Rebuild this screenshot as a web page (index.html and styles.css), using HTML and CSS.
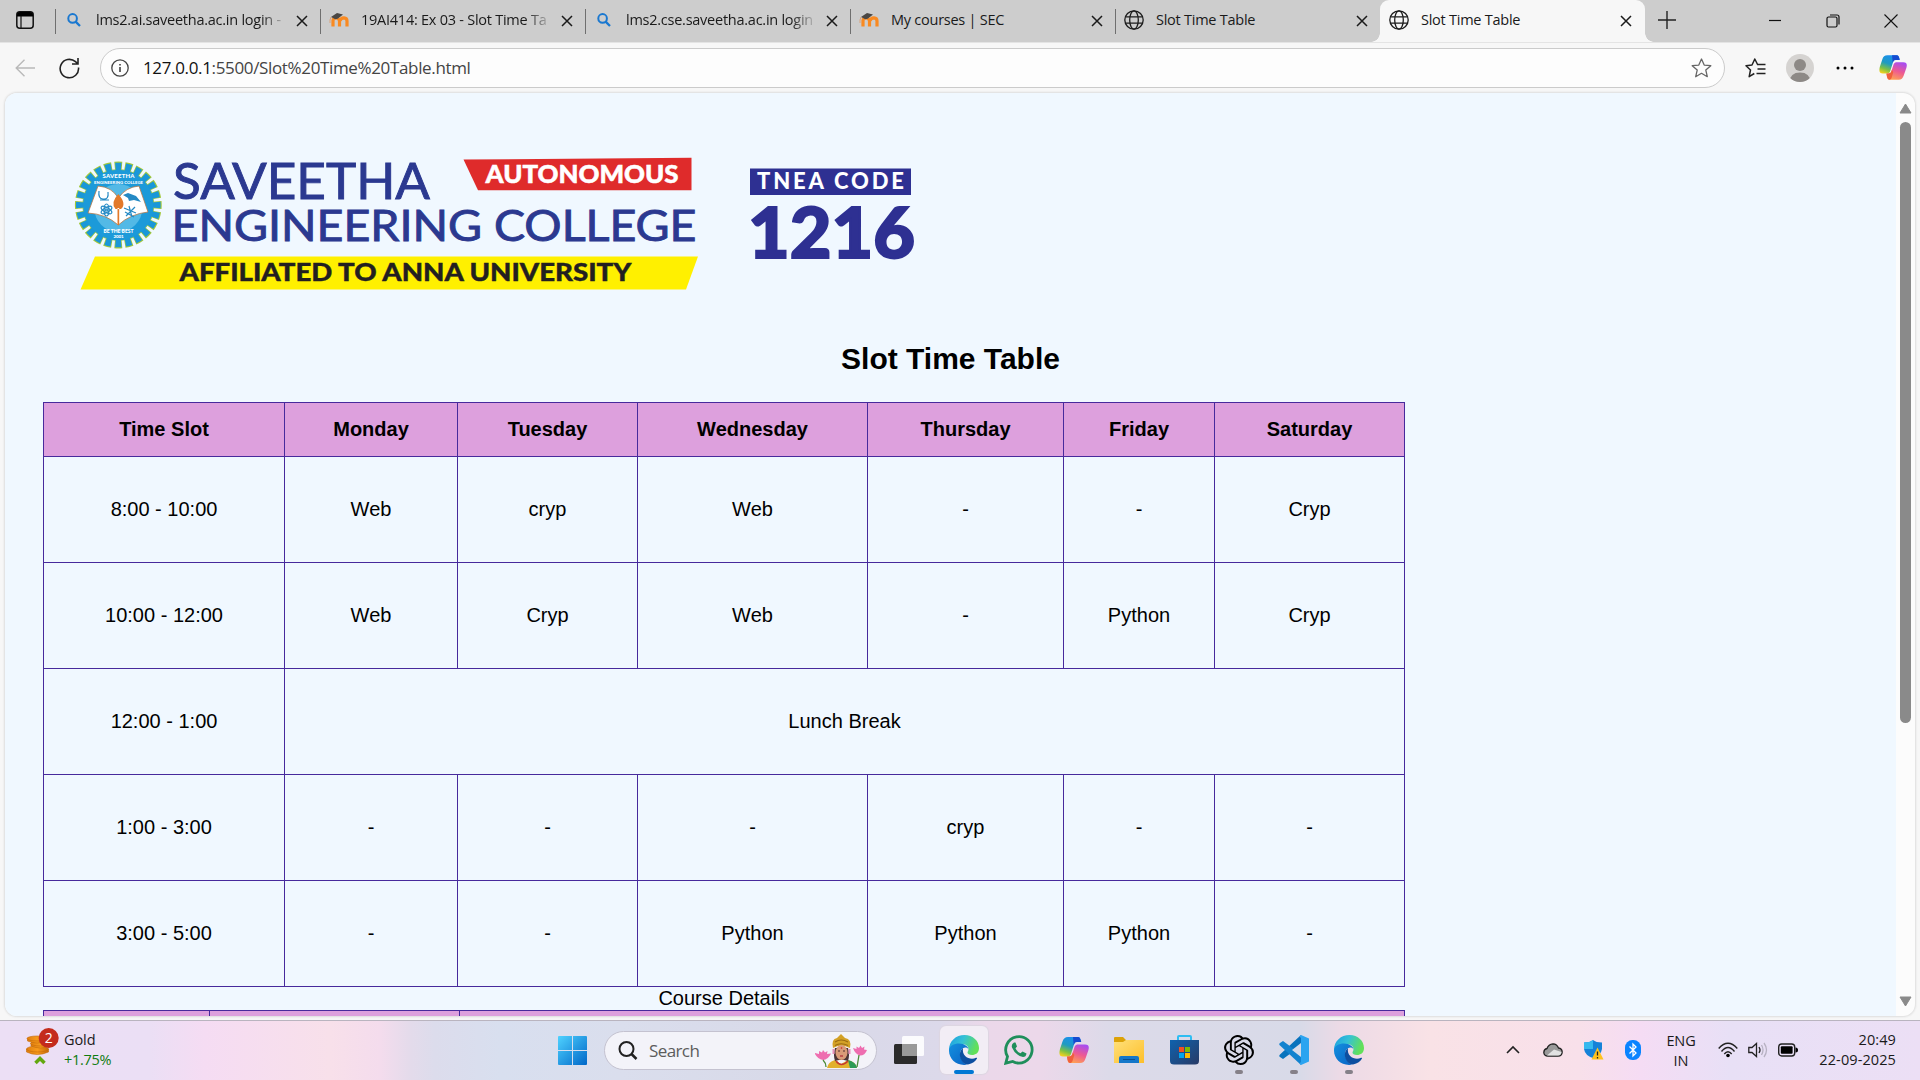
FILE: index.html
```html
<!DOCTYPE html>
<html lang="en">
<head>
<meta charset="utf-8">
<title>Slot Time Table</title>
<link rel="stylesheet" href="styles.css">
</head>
<body>
<svg class="defs" width="0" height="0" aria-hidden="true">
  <defs>
    <linearGradient id="edgeTop" x1="0" y1="0" x2="1" y2=".3"><stop offset="0" stop-color="#1b9de2"/><stop offset=".5" stop-color="#35c1d6"/><stop offset="1" stop-color="#62e05a"/></linearGradient>
    <linearGradient id="edgeLow" x1="0" y1="0" x2="1" y2="1"><stop offset="0" stop-color="#1490df"/><stop offset="1" stop-color="#0a62c4"/></linearGradient>
    <linearGradient id="copA" x1=".6" y1="0" x2=".2" y2="1"><stop offset="0" stop-color="#1a8ff0"/><stop offset=".45" stop-color="#1f9bc0"/><stop offset=".75" stop-color="#7cc144"/><stop offset="1" stop-color="#f6d21c"/></linearGradient>
    <linearGradient id="copB" x1=".7" y1="0" x2=".3" y2="1"><stop offset="0" stop-color="#a84df0"/><stop offset=".5" stop-color="#ee5a92"/><stop offset="1" stop-color="#ffa353"/></linearGradient>
    <linearGradient id="win" x1="0" y1="0" x2="1" y2="1"><stop offset="0" stop-color="#4fd2ff"/><stop offset="1" stop-color="#0067c8"/></linearGradient>
    <linearGradient id="folder" x1="0" y1="0" x2="1" y2="1"><stop offset="0" stop-color="#ffe07a"/><stop offset="1" stop-color="#fdbf2a"/></linearGradient>
    <linearGradient id="store" x1="0" y1="0" x2="1" y2="1"><stop offset="0" stop-color="#0f62ae"/><stop offset="1" stop-color="#283a66"/></linearGradient>
    <linearGradient id="coin" x1="0" y1="0" x2="1" y2="0"><stop offset="0" stop-color="#e07f10"/><stop offset=".5" stop-color="#f79a1c"/><stop offset="1" stop-color="#c96a08"/></linearGradient>
    <symbol id="edge" viewBox="0 0 30 30">
      <path d="M0 15C0 6 7 0 15.500 0C24 0 30 6 30 13C30 18 26.500 20 23 20C20 20 18.500 18.800 18.500 17.500C18.500 16.500 19.500 16 19.500 14C19.500 11 16.500 9 12.500 9C6 9 1 13 0 17Z" fill="url(#edgeTop)"/>
      <path d="M0 15.500C0 11 5 8.500 10 8.500C15.500 8.500 19.300 11.500 19.500 14.500C18.500 12.500 16 12 14 13.200C11 15 10.500 19 12 23C13 26 15.500 29 18.500 29.600C8 31.500 0 24.500 0 15.500Z" fill="url(#edgeLow)"/>
      <path d="M14 13C11 15.500 10.500 19 11 21.500C12 26.500 15.500 29.500 19 29.500C23.500 28.500 26.500 26 28 23.400C28.300 22.600 27.600 22.500 27 22.800C21.500 25.500 12.500 22 14 13Z" fill="#0d4fa0"/>
    </symbol>
    <symbol id="copilot" viewBox="0 0 30 28">
      <path d="M9 1H19C21 1 21.500 3 22 5.500H18C16 5.500 15.300 7 14.500 10L12 18C11.300 20 10 20.500 8 20.500H4C0 20.500 0 17 1 13L3.500 5.500C4.500 2.500 6 1 9 1Z" fill="url(#copA)"/>
      <path d="M14 1H19C21 1 21.500 3 22.300 6H18C16 6 15.500 7 14.700 9.500Z" fill="#164bd0"/>
      <path d="M21 27H11C9 27 8.500 25 8 20.500H10C12 20.500 13 19.500 13.800 16.500L15.500 11C16.300 9 17.500 8.500 19.500 8.500H26C30 8.500 30.300 11 29.300 14.500L26.500 22.500C25.500 25.500 24 27 21 27Z" fill="url(#copB)"/>
      <path d="M8 20.500H10C12 20.500 13 19.500 13.800 16.500L15.300 19L13.500 25C13 26.500 12 27 11 27C9 27 8.500 24 8 20.500Z" fill="#f0603c"/>
    </symbol>
    <symbol id="globe" viewBox="0 0 20 20"><g fill="none" stroke="#1c1c1c" stroke-width="1.300"><circle cx="10" cy="10" r="9.200"/><ellipse cx="10" cy="10" rx="4.300" ry="9.200"/><path d="M1.600 6.800H18.400M1.600 13.200H18.400"/></g></symbol>
    <symbol id="x" viewBox="0 0 12 12"><path d="M1 1L11 11M11 1L1 11" fill="none" stroke="#1a1a1a" stroke-width="1.500"/></symbol>
    <symbol id="lens" viewBox="0 0 14 14"><circle cx="5.600" cy="5.400" r="4.300" fill="none" stroke="#1a78d0" stroke-width="2"/><path d="M8.600 8.600L13 13" stroke="#1a78d0" stroke-width="2.300"/></symbol>
    <symbol id="moodle" viewBox="0 0 20 16"><path d="M4 14.500V8.500Q4.500 5.500 7.500 6Q10 6.300 10.500 9V14.500M11 9Q11.500 5.800 15 5.800Q18 6 18 9V14.500" fill="none" stroke="#f98a22" stroke-width="3.200"/><path d="M2 5L8 1L14 2.500L9 6.500Q6 8 4 6Z" fill="#4a4744"/><path d="M2 5Q.5 8 1 11" stroke="#d9a27c" fill="none"/></symbol>
  </defs>
</svg>

<header class="tabs">
  <div class="workspace"><svg width="18" height="18" viewBox="0 0 18 18"><rect x=".8" y=".8" width="16.400" height="16.400" rx="3" fill="none" stroke="#111" stroke-width="1.500"/><path d="M1 4Q1 1 4 1H14Q17 1 17 4V5.500H1Z"/><path d="M5 5V17" stroke="#111" stroke-width="1.200"/></svg></div>
  <div class="tab"><svg class="fav small"><use href="#lens"/></svg><span class="label fade">lms2.ai.saveetha.ac.in login -</span><svg class="close"><use href="#x"/></svg></div>
  <div class="tab"><svg class="fav"><use href="#moodle"/></svg><span class="label fade">19AI414: Ex 03 - Slot Time Ta</span><svg class="close"><use href="#x"/></svg></div>
  <div class="tab"><svg class="fav small"><use href="#lens"/></svg><span class="label fade">lms2.cse.saveetha.ac.in login</span><svg class="close"><use href="#x"/></svg></div>
  <div class="tab"><svg class="fav"><use href="#moodle"/></svg><span class="label">My courses | SEC</span><svg class="close"><use href="#x"/></svg></div>
  <div class="tab"><svg class="fav"><use href="#globe"/></svg><span class="label">Slot Time Table</span><svg class="close"><use href="#x"/></svg></div>
  <div class="tab active"><svg class="fav"><use href="#globe"/></svg><span class="label">Slot Time Table</span><svg class="close"><use href="#x"/></svg></div>
  <svg class="plus" width="18" height="18" viewBox="0 0 18 18"><path d="M9 0V18M0 9H18" stroke="#222" stroke-width="1.400"/></svg>
  <div class="winbtns">
    <svg width="14" height="14" viewBox="0 0 14 14"><path d="M1 6.500H13" stroke="#111" stroke-width="1.200"/></svg>
    <svg width="14" height="14" viewBox="0 0 14 14"><g fill="none" stroke="#111" stroke-width="1.200"><rect x="1" y="3" width="10" height="10" rx="1.500"/><path d="M4 1H11Q13 1 13 3V10.500"/></g></svg>
    <svg width="14" height="14" viewBox="0 0 14 14"><path d="M.5 .5L13.500 13.500M13.500 .5L.5 13.500" stroke="#111" stroke-width="1.100"/></svg>
  </div>
</header>

<nav class="toolbar">
  <svg class="back" width="21" height="18" viewBox="0 0 21 18"><path d="M20 9H1M9.500 .8L1.200 9L9.500 17.200" fill="none" stroke="#b9b9b9" stroke-width="1.400"/></svg>
  <svg class="reload" width="21" height="22" viewBox="0 0 21 22"><path d="M19.500 10.500A9.200 9.200 0 1 1 16.500 4.700L19 7M19 1V7H13" fill="none" stroke="#222" stroke-width="1.600"/></svg>
  <div class="url">
    <svg width="18" height="18" viewBox="0 0 18 18"><circle cx="9" cy="9" r="8.200" fill="none" stroke="#444" stroke-width="1.300"/><path d="M9 8V13M9 5V6.500" stroke="#333" stroke-width="1.500"/></svg>
    <span class="address"><b>127.0.0.1</b>:5500/Slot%20Time%20Table.html</span>
    <svg class="star" width="21" height="20" viewBox="0 0 21 20"><path d="M10.500 1L13.200 7.100L19.800 7.700L14.800 12.100L16.300 18.700L10.500 15.300L4.700 18.700L6.200 12.100L1.200 7.700L7.800 7.100Z" fill="none" stroke="#666" stroke-width="1.300" stroke-linejoin="round"/></svg>
  </div>
  <svg class="favs" width="21" height="20" viewBox="0 0 21 20"><path d="M12.800 7L9.800 1L7 7L1 7.700L5.500 12L4.200 18.700L9.300 15.500M12.500 6.500H20.500M12.500 11H20.500M11.500 15.500H20.500" fill="none" stroke="#222" stroke-width="1.500" stroke-linejoin="round"/></svg>
  <svg class="avatar" width="28" height="28" viewBox="0 0 28 28"><clipPath id="av"><circle cx="14" cy="14" r="14"/></clipPath><g clip-path="url(#av)"><path fill="#d5d3d1" d="M0 0H28V28H0Z"/><circle cx="14" cy="11" r="6" fill="#8d8986"/><path d="M3.500 28Q4 18.500 14 18.500T24.500 28Z" fill="#8d8986"/></g></svg>
  <svg class="more" width="18" height="4" viewBox="0 0 18 4"><circle cx="2" cy="2" r="1.500"/><circle cx="9" cy="2" r="1.500"/><circle cx="16" cy="2" r="1.500"/></svg>
  <svg class="cop" width="28" height="27"><use href="#copilot"/></svg>
</nav>

<div class="viewport">
  <main class="page">
    <svg class="banner" width="880" height="160" viewBox="60 140 880 160">
      <circle cx="118.300" cy="205" r="38.700" fill="none" stroke="#a3c83a" stroke-width="9.400" pathLength="240" stroke-dasharray="7.200 2.800" stroke-dashoffset="3.600"/>
      <circle cx="118.300" cy="205" r="36" fill="#8fc35a"/>
      <circle cx="118.300" cy="205" r="38.200" fill="none" stroke="#1a97d8" stroke-width="8.200" pathLength="240" stroke-dasharray="5.800 4.200" stroke-dashoffset="2.900"/>
      <circle cx="118.300" cy="205" r="35.200" fill="#1c9ad9"/>
      <circle cx="118.300" cy="208" r="24" fill="#53b9e6"/>
      <path d="M88 213L98 186Q112 187 118.300 198Q126 187 139 186L148 212Q130 214 118.300 225Q106 214 88 213Z" fill="#fff" stroke="#b5784a" stroke-width=".8"/>
      <path d="M118.300 194Q127 204 121 209H115.500Q110 203 118.300 194ZM117.500 208V225H119.200V208Z" fill="#e2792a"/>
      <g fill="none" stroke="#2489c4" stroke-width="1.200"><path d="M99 191Q98 199 103 199Q109 200 108 192M100 200H109"/><ellipse cx="106.500" cy="210" rx="6" ry="2.400" transform="rotate(30 106.500 210)"/><ellipse cx="106.500" cy="210" rx="6" ry="2.400" transform="rotate(-30 106.500 210)"/><ellipse cx="106.500" cy="210" rx="2.400" ry="6"/><circle cx="106.500" cy="210" r="1"/><path d="M124 208L136 213M126 216L135 207M129 206L132 217M125 212L134 217"/></g>
      <path d="M123 195L128 193L136 196L141 202L134 200L129 201L128 198Z" fill="#2489c4"/>
      <g fill="#fff" font-family="Lato, sans-serif" font-weight="900"><text x="102.500" y="178" font-size="6" textLength="32">SAVEETHA</text><text x="94" y="184" font-size="4.200" textLength="49">ENGINEERING COLLEGE</text><text x="103.500" y="232.500" font-size="5" textLength="30">BE THE BEST</text><text x="113.500" y="238" font-size="4.500" textLength="10">2001</text></g>
      <g class="college"><text x="173" y="199.300" font-size="49.500" textLength="257" lengthAdjust="spacingAndGlyphs">SAVEETHA</text><text x="171.500" y="241" font-size="42.500" textLength="525" lengthAdjust="spacingAndGlyphs">ENGINEERING COLLEGE</text></g>
      <path d="M463.500 159.500L691.500 157.800V190.200H478Z" fill="#df2b2b"/>
      <text class="heavy" x="485.500" y="182.800" font-size="25" fill="#fff" stroke="#fff" stroke-width=".5" textLength="193" lengthAdjust="spacingAndGlyphs">AUTONOMOUS</text>
      <path d="M95 256.500H698L686 289.500H80.500Z" fill="#fff000"/>
      <text class="heavy" x="179.500" y="281" font-size="24.500" fill="#231f20" stroke="#231f20" stroke-width=".4" textLength="452" lengthAdjust="spacingAndGlyphs">AFFILIATED TO ANNA UNIVERSITY</text>
      <path d="M750 168.500H911V195H750Z" fill="#2e3092"/>
      <text class="heavy" x="757" y="189.200" font-size="22" fill="#fff" textLength="147">TNEA CODE</text>
      <text class="heavy code" x="748" y="257.500" font-size="71" textLength="167" lengthAdjust="spacingAndGlyphs">1216</text>
    </svg>
    <h2>Slot Time Table</h2>
    <table class="slots">
      <colgroup><col class="c1"><col class="c2"><col class="c3"><col class="c4"><col class="c5"><col class="c6"><col class="c7"></colgroup>
      <tr><th>Time Slot</th><th>Monday</th><th>Tuesday</th><th>Wednesday</th><th>Thursday</th><th>Friday</th><th>Saturday</th></tr>
      <tr><td>8:00 - 10:00</td><td>Web</td><td>cryp</td><td>Web</td><td>-</td><td>-</td><td>Cryp</td></tr>
      <tr><td>10:00 - 12:00</td><td>Web</td><td>Cryp</td><td>Web</td><td>-</td><td>Python</td><td>Cryp</td></tr>
      <tr><td>12:00 - 1:00</td><td colspan="6">Lunch Break</td></tr>
      <tr><td>1:00 - 3:00</td><td>-</td><td>-</td><td>-</td><td>cryp</td><td>-</td><td>-</td></tr>
      <tr><td>3:00 - 5:00</td><td>-</td><td>-</td><td>Python</td><td>Python</td><td>Python</td><td>-</td></tr>
    </table>
    <table class="courses">
      <caption>Course Details</caption>
      <colgroup><col class="d1"><col class="d2"><col class="d3"></colgroup>
      <tr><th></th><th></th><th></th></tr>
    </table>
  </main>
  <div class="scroll">
    <svg width="13" height="11" viewBox="0 0 13 11"><path d="M6.500 1L12 10H1Z" fill="#8a8a8a" stroke="#8a8a8a" stroke-linejoin="round"/></svg>
    <div class="track"><div class="thumb"></div></div>
    <svg width="13" height="11" viewBox="0 0 13 11"><path d="M6.500 10L12 1H1Z" fill="#8a8a8a" stroke="#8a8a8a" stroke-linejoin="round"/></svg>
  </div>
</div>

<footer class="taskbar">
  <div class="widget">
    <svg width="36" height="40" viewBox="25 1027 36 40"><g fill="url(#coin)" stroke="#c26a08" stroke-width=".6"><path d="M26.500 1049V1052Q37 1057 48.500 1052V1049Z"/><ellipse cx="37.500" cy="1049" rx="11" ry="3"/><path d="M31 1043V1046Q41 1050 50 1046V1043Z"/><ellipse cx="40.500" cy="1043.500" rx="10" ry="2.500"/><path d="M27.500 1038V1041Q37 1045 47 1041V1038Z"/><ellipse cx="37" cy="1038.500" rx="10" ry="2.500"/></g><path d="M35.500 1063L40 1058.500L44.500 1063" fill="none" stroke="#62a80f" stroke-width="3.500"/><circle cx="48.700" cy="1038" r="10" fill="#c42b1c"/><text class="badge" x="48.700" y="1043.200">2</text></svg>
    <div class="quote"><span>Gold</span><span class="up">+1.75%</span></div>
  </div>
  <div class="apps">
    <svg class="start" width="29" height="29" viewBox="0 0 29 29"><path d="M1 0H14V14H0V1Q0 0 1 0ZM15 0H28Q29 0 29 1V14H15ZM0 15H14V29H1Q0 29 0 28ZM15 15H29V28Q29 29 28 29H15Z" fill="url(#win)"/></svg>
    <div class="search">
      <svg width="20" height="20" viewBox="0 0 20 20"><circle cx="8.500" cy="8" r="7" fill="none" stroke="#222" stroke-width="2"/><path d="M13.500 13L18.500 18" stroke="#222" stroke-width="2.500"/></svg>
      <span>Search</span>
      <svg class="deity" width="52" height="34" viewBox="0 0 52 34">
        <path d="M12 34Q13 28 20 26L26 30L33 26Q41 28 42 34Z" fill="#e2b02c"/><path d="M33 26Q41 28 42 34H35Z" fill="#2c9b55"/>
        <path d="M20 14Q18 21 20 27L24 26H29L33 27Q35 21 33 14Z" fill="#4a3436"/>
        <path d="M18 14Q16 5 22 4L26 0L30 4Q37 5 35 14Q26 9 18 14Z" fill="#d3a126"/><path d="M20 8Q26 4 33 8M20 11.500Q26 8 33 11.500" stroke="#9c6b12" fill="none" stroke-width="1.200"/>
        <ellipse cx="26.500" cy="18.500" rx="6" ry="7.500" fill="#d99b78"/><path d="M23 17H25M28 17H30" stroke="#4f2c2c" stroke-width="1.200"/><path d="M25 22H28" stroke="#b22f3c" stroke-width="1.300"/><circle cx="26.500" cy="14" r=".8" fill="#c22"/>
        <path d="M18.500 15V20M34.500 15V20" stroke="#e78fb9" stroke-width="2"/>
        <path d="M21 27Q26 34 33 27" fill="none" stroke="#c43832" stroke-width="1.500"/>
        <g fill="#ee6db0"><path d="M-.5 19L4 20L4 17L7 18.500L8 16L10 18.500L12.500 17L12 20L16 19.500Q13 26 8 26Q2 25 -.5 19Z"/><path d="M38 14L41.500 15L41.500 12.500L44 14L45.500 11.500L47 14L49.500 12.500L49 15.500L52 16Q50 21.500 45 21.500Q40 20 38 14Z"/></g><path d="M8 26Q11 29 11 33M44 21L42 33" stroke="#4d8c3a" fill="none" stroke-width="1.300"/>
      </svg>
    </div>
    <div class="app task"><svg width="30" height="28" viewBox="0 0 30 28"><rect x="0" y="8" width="23" height="20" rx="1.500" fill="#2b2b2b"/><rect x="8" y="0" width="22" height="20" rx="1.500" fill="#fff" opacity=".88"/><path d="M8 8H23V20H8Z" fill="#999"/></svg></div>
    <div class="app current"><svg width="30" height="30"><use href="#edge"/></svg></div>
    <div class="app"><svg width="30" height="30" viewBox="0 0 30 30"><path d="M1.800 28.200L3.500 21.500A13.200 13.200 0 1 1 8.700 26.500Z" fill="none" stroke="#1f8f5b" stroke-width="2.800"/><path d="M10 7.500Q7 9 8 12.500Q11 20 19 22Q22 22 22.500 18.500L18.500 16.500L16.500 18.300Q13 17 11.500 13.200L13 11.500L11.500 7.500Z" fill="#1f8f5b"/></svg></div>
    <div class="app"><svg width="30" height="28"><use href="#copilot"/></svg></div>
    <div class="app"><svg width="30" height="28" viewBox="0 0 30 28"><path d="M0 2Q0 1 1 1H9L12 4H30V12H0Z" fill="#dca208"/><path d="M0 6H9L12 4H30V27H0Z" fill="url(#folder)"/><path d="M5 27V22Q5 20 7 20H23Q25 20 25 22V27Z" fill="#1577c9"/><path d="M9 23.500H21" stroke="#0b4f91"/></svg></div>
    <div class="app"><svg width="29" height="30" viewBox="0 0 29 30"><path d="M8 6V2Q8 1 9 1H20Q21 1 21 2V6" fill="none" stroke="#2fbdf2" stroke-width="2"/><path d="M0 5H29V26Q29 29.500 25 29.500H4Q0 29.500 0 26Z" fill="url(#store)"/><path d="M9 12H14V17H9Z" fill="#f25022"/><path d="M15 12H20V17H15Z" fill="#7fba00"/><path d="M9 18H14V23H9Z" fill="#00a4ef"/><path d="M15 18H20V23H15Z" fill="#ffb900"/></svg></div>
    <div class="app open"><svg width="30" height="30" viewBox="0 0 24 24"><path d="M22.282 9.821a5.985 5.985 0 0 0-.516-4.910 6.046 6.046 0 0 0-6.510-2.900A6.065 6.065 0 0 0 4.981 4.182a5.985 5.985 0 0 0-3.998 2.900 6.046 6.046 0 0 0 .743 7.097 5.980 5.980 0 0 0 .510 4.911 6.051 6.051 0 0 0 6.515 2.900A5.985 5.985 0 0 0 13.260 24a6.056 6.056 0 0 0 5.772-4.206 5.990 5.990 0 0 0 3.998-2.900 6.056 6.056 0 0 0-.747-7.073zM13.260 22.430a4.476 4.476 0 0 1-2.876-1.041l.141-.081 4.779-2.758a.795.795 0 0 0 .393-.681v-6.737l2.020 1.169a.071.071 0 0 1 .038.052v5.583a4.504 4.504 0 0 1-4.495 4.494zM3.600 18.304a4.470 4.470 0 0 1-.535-3.014l.142.085 4.783 2.759a.771.771 0 0 0 .781 0l5.843-3.369v2.332a.080.080 0 0 1-.033.062L9.740 19.950a4.500 4.500 0 0 1-6.140-1.646zM2.341 7.896a4.485 4.485 0 0 1 2.366-1.973V11.600a.766.766 0 0 0 .388.677l5.815 3.355-2.020 1.168a.076.076 0 0 1-.071 0l-4.830-2.786A4.504 4.504 0 0 1 2.341 7.872zm16.597 3.855l-5.833-3.387L15.119 7.200a.076.076 0 0 1 .071 0l4.830 2.791a4.494 4.494 0 0 1-.676 8.105v-5.678a.790.790 0 0 0-.407-.667zm2.010-3.023l-.141-.085-4.774-2.782a.776.776 0 0 0-.785 0L9.409 9.230V6.897a.066.066 0 0 1 .028-.061l4.830-2.787a4.500 4.500 0 0 1 6.680 4.660zm-12.640 4.135l-2.020-1.164a.080.080 0 0 1-.038-.057V6.075a4.500 4.500 0 0 1 7.375-3.453l-.142.080-4.778 2.758a.795.795 0 0 0-.393.681zm1.097-2.365l2.602-1.500 2.607 1.500v2.999l-2.597 1.500-2.607-1.500z"/></svg></div>
    <div class="app open"><svg width="30" height="30" viewBox="0 0 30 30"><path d="M22 0L23 10L4 24L1 22Q-.5 21 1 19.500Z" fill="#0873bd"/><path d="M22 30L23 20L4 6L1 8Q-.5 9 1 10.500Z" fill="#1283cf"/><path d="M22 0L30 3.500V26.500L22 30L20.500 28.500L22 27V3L20.500 1.500Z" fill="#2ba4f0"/><path d="M22 8V22L13 15Z" fill="#d7dbe9"/></svg></div>
    <div class="app open"><svg width="30" height="30"><use href="#edge"/></svg></div>
  </div>
  <div class="tray">
    <svg class="chev" width="14" height="9" viewBox="0 0 14 9"><path d="M1 8L7 2L13 8" fill="none" stroke="#222" stroke-width="1.600"/></svg>
    <svg class="cloud" width="20" height="14" viewBox="0 0 20 14"><path d="M5 13.200Q1 13 .8 9.500Q1 6 4 5.500Q5.500 1 10 .8Q14 1 15.500 5Q19 5.500 19.200 9Q19 13 15 13.200Z" fill="#9a9a9a" stroke="#222" stroke-width="1.300"/><path d="M4 12.500L11 6.500L18.500 9Q18 12.500 15 12.500Z" fill="#e2e2e2"/></svg>
    <svg class="shield" width="20" height="20" viewBox="0 0 20 20"><path d="M9 0Q12 2.500 18 2.500V9Q17 15.500 9 18Q1 15.500 0 9V2.500Q6 2.500 9 0Z" fill="#1582d8"/><path d="M9 0V9H0V2.500Q6 2.500 9 0Z" fill="#35b9ee"/><path d="M13.500 7.500L19.500 19.500H7.500Z" fill="#ffc21c"/><path d="M13.500 11.500V15.500M13.500 17V18.500" stroke="#222" stroke-width="1.300"/></svg>
    <svg class="bt" width="16" height="20" viewBox="0 0 16 20"><rect width="16" height="20" rx="7.500" fill="#0a84ff"/><path d="M4.500 6.500L11 13L8 16V4L11 7L4.500 13.500" fill="none" stroke="#fff" stroke-width="1.300"/></svg>
    <div class="lang"><span>ENG</span><span>IN</span></div>
    <svg class="wifi" width="20" height="16" viewBox="0 0 20 16"><g fill="none" stroke="#222" stroke-width="1.400"><path d="M.7 6.500Q10-4 19.300 6.500M3.500 9.500Q10 1.500 16.500 9.500M6.300 12Q10 7.500 13.700 12"/></g><circle cx="10" cy="13.500" r="1.800"/></svg>
    <svg class="vol" width="20" height="16" viewBox="0 0 20 16"><g fill="none" stroke="#222" stroke-width="1.300"><path d="M.8 5.500H4L8.500 1.500V14.500L4 10.500H.8Z"/><path d="M11 5Q13 8 11 11"/><path d="M13.500 3Q16.500 8 13.500 13M16 1Q21 8 16 15" stroke="#b7b1c2"/></g></svg>
    <svg class="bat" width="20" height="14" viewBox="0 0 20 14"><rect x=".7" y="1" width="16" height="12" rx="3" fill="none" stroke="#222" stroke-width="1.400"/><rect x="2.800" y="3.200" width="11.800" height="7.600" rx="1"/><path d="M17.500 4.500Q20 4.500 20 7T17.500 9.500Z"/></svg>
    <div class="clock"><span>20:49</span><span>22-09-2025</span></div>
  </div>
</footer>
</body>
</html>
```
FILE: styles.css
```css
* { box-sizing: border-box; }
body {
  margin: 0;
  width: 1920px;
  height: 1080px;
  overflow: hidden;
  display: flex;
  flex-direction: column;
  background: #f7f7f7;
  font-family: "Open Sans", "Noto Sans", sans-serif;
  color: #1a1a1a;
}
svg { display: block; flex: none; }
.defs { position: absolute; }

/* Tab strip */
.tabs {
  height: 42px;
  flex: none;
  display: flex;
  background: #cdcdcd;
}
.workspace { width: 55px; padding: 11px 0 0 16px; }
.tab {
  position: relative;
  width: 265px;
  flex: none;
  display: flex;
  align-items: center;
  padding: 0 12px 3px 9px;
}
.tab::before {
  content: "";
  position: absolute;
  left: 0;
  top: 9px;
  width: 1px;
  height: 25px;
  background: #6f6f6f;
}
.tab.active { background: #f7f7f7; border-radius: 9px 9px 0 0; }
.tab.active::before,
.tab.active::after {
  content: "";
  position: absolute;
  top: auto;
  bottom: 0;
  left: -9px;
  width: 9px;
  height: 9px;
  background: radial-gradient(circle at 0 0, #cdcdcd 8.5px, #f7f7f7 9px);
}
.tab.active::after {
  left: auto;
  right: -9px;
  background: radial-gradient(circle at 100% 0, #cdcdcd 8.5px, #f7f7f7 9px);
}
.fav { width: 20px; height: 20px; }
.fav.small { width: 14px; height: 14px; margin: 0 3px; }
.label {
  width: 189px;
  margin-left: 12px;
  font-size: 14.5px;
  letter-spacing: -0.25px;
  line-height: 22px;
  white-space: nowrap;
}
.label.fade { mask-image: linear-gradient(90deg, #000 165px, transparent 192px); }
.close { width: 12px; height: 12px; margin: 2px 0 0 11px; }
.active .close { margin-left: 10px; }
.plus { margin: 11px 0 0 13px; }
.winbtns { margin: 14px 0 0 92px; display: flex; gap: 44px; }

/* Toolbar */
.toolbar {
  height: 51px;
  flex: none;
  display: flex;
  align-items: center;
  padding-bottom: 1px;
  border-top: 1px solid #e4e4e4;
}
.back { margin-left: 15px; }
.reload { margin-left: 23px; }
.url {
  margin-left: 20px;
  width: 1625px;
  height: 40px;
  border: 1px solid #cbcbcb;
  border-radius: 20px;
  background: #fdfdfd;
  display: flex;
  align-items: center;
  padding: 0 12px 0 10px;
}
.address { margin-left: 14px; font-size: 17px; letter-spacing: -0.35px; color: #444; }
.address b { font-weight: 400; color: #111; }
.star { margin-left: auto; }
.favs { margin-left: 20px; }
.avatar { margin-left: 20px; }
.more { margin-left: 22px; }
.cop { margin-left: 25px; }

/* Page */
.viewport {
  margin-left: 5px;
  width: 1910px;
  height: 923px;
  flex: none;
  display: flex;
  border-radius: 12px;
  overflow: hidden;
  background: #fcfcfc;
  box-shadow: 0 0 2px 1px #ddd;
}
.page {
  width: 1891px;
  background: aliceblue;
  padding: 47px 0 0 38px;
  overflow: hidden;
  font-family: "Liberation Sans", Arial, sans-serif;
  font-size: 20px;
  color: #000;
}
.banner { margin-left: 17px; }
.college { fill: #2b3990; stroke: #2b3990; stroke-width: .9; font-family: Lato, sans-serif; }
.heavy { font-family: Lato, sans-serif; font-weight: 900; }
.code { fill: #2e3092; stroke: #2e3092; stroke-width: 2; }
h2 {
  margin: 42px 38px 25px 0;
  height: 35px;
  font-size: 30px;
  line-height: 34px;
  text-align: center;
}
table { width: 1362px; table-layout: fixed; border-collapse: collapse; line-height: 23px; }
th, td { border: 1px solid #472a9c; padding: 0; text-align: center; }
th { height: 54px; background: plum; }
td { height: 106px; }
.c1 { width: 241px; }
.c2 { width: 173px; }
.c3 { width: 180px; }
.c4 { width: 230px; }
.c5 { width: 196px; }
.c6 { width: 151px; }
.c7 { width: 190px; }
.d1 { width: 166px; }
.d2 { width: 250px; }
.scroll {
  width: 19px;
  display: flex;
  flex-direction: column;
  align-items: center;
  padding: 10px 0 9px;
}
.track { flex: 1; padding-top: 8px; }
.thumb { width: 11px; height: 601px; border-radius: 6px; background: #8a8a8a; }

/* Taskbar */
.taskbar {
  margin-top: 4px;
  height: 60px;
  flex: none;
  display: flex;
  border-top: 1px solid #b9b4bf;
  background: linear-gradient(90deg, #ecdff5 0, #ebdff5 150px, #f5dcf3 205px, #f8e0ea 330px, #f4dced 380px, #e4dbeb 410px, #dcdcec 435px, #d8dfef 500px, #dadeed 620px, #d8d9e8 800px, #dcd9ea 940px, #ebd8ea 985px, #ecd8ea 1040px, #dcdae9 1110px, #d8dae8 1300px, #ecdae6 1340px, #f9e2e6 1430px, #f8e0ea 1580px, #f5dcf4 1640px, #e8e0f6 1730px, #ecdff5 1920px);
}
.widget { width: 534px; padding: 6px 0 0 25px; display: flex; }
.badge { fill: #fff; font-size: 14px; text-anchor: middle; }
.quote, .lang, .clock {
  display: flex;
  flex-direction: column;
  font-size: 14.5px;
  line-height: 20px;
  letter-spacing: -0.1px;
}
.quote { margin: 3px 0 0 3px; }
.up { color: #0f7b0f; letter-spacing: -0.3px; }
.apps { display: flex; align-items: flex-start; }
.start { margin: 15px 0 0 24px; }
.search {
  margin: 10px 0 0 17px;
  width: 273px;
  height: 39px;
  border: 1px solid #c4c2d0;
  border-radius: 20px;
  background: #f3f3f9;
  display: flex;
  align-items: center;
  padding: 0 9px 0 13px;
}
.search span { margin-left: 11px; font-size: 17px; letter-spacing: -0.6px; color: #5c5c5c; }
.deity { margin-left: auto; }
.app {
  position: relative;
  width: 48px;
  height: 48px;
  margin: 5px 0 0 7px;
  display: grid;
  place-items: center;
}
.task { margin-left: 8px; }
.current { background: #f2edf5; border-radius: 6px; box-shadow: 0 0 1px 1px #ddd6e2; }
.current::after, .open::after {
  content: "";
  position: absolute;
  bottom: 0;
  left: 20px;
  width: 8px;
  height: 4px;
  border-radius: 2px;
  background: #858088;
}
.current::after { left: 14px; width: 20px; background: #0078d4; }
.tray { flex: 1; display: flex; align-items: flex-start; padding-right: 24px; }
.chev { margin: 24px 0 0 133px; }
.cloud { margin: 22px 0 0 23px; }
.shield { margin: 19px 0 0 21px; }
.bt { margin: 19px 0 0 21px; }
.lang { margin: 10px 0 0 24px; width: 32px; align-items: center; }
.wifi { margin: 21px 0 0 21px; }
.vol { margin: 21px 0 0 10px; }
.bat { margin: 22px 0 0 10px; }
.clock { margin: 9px 0 0 auto; align-items: flex-end; letter-spacing: 0.1px; }
```
